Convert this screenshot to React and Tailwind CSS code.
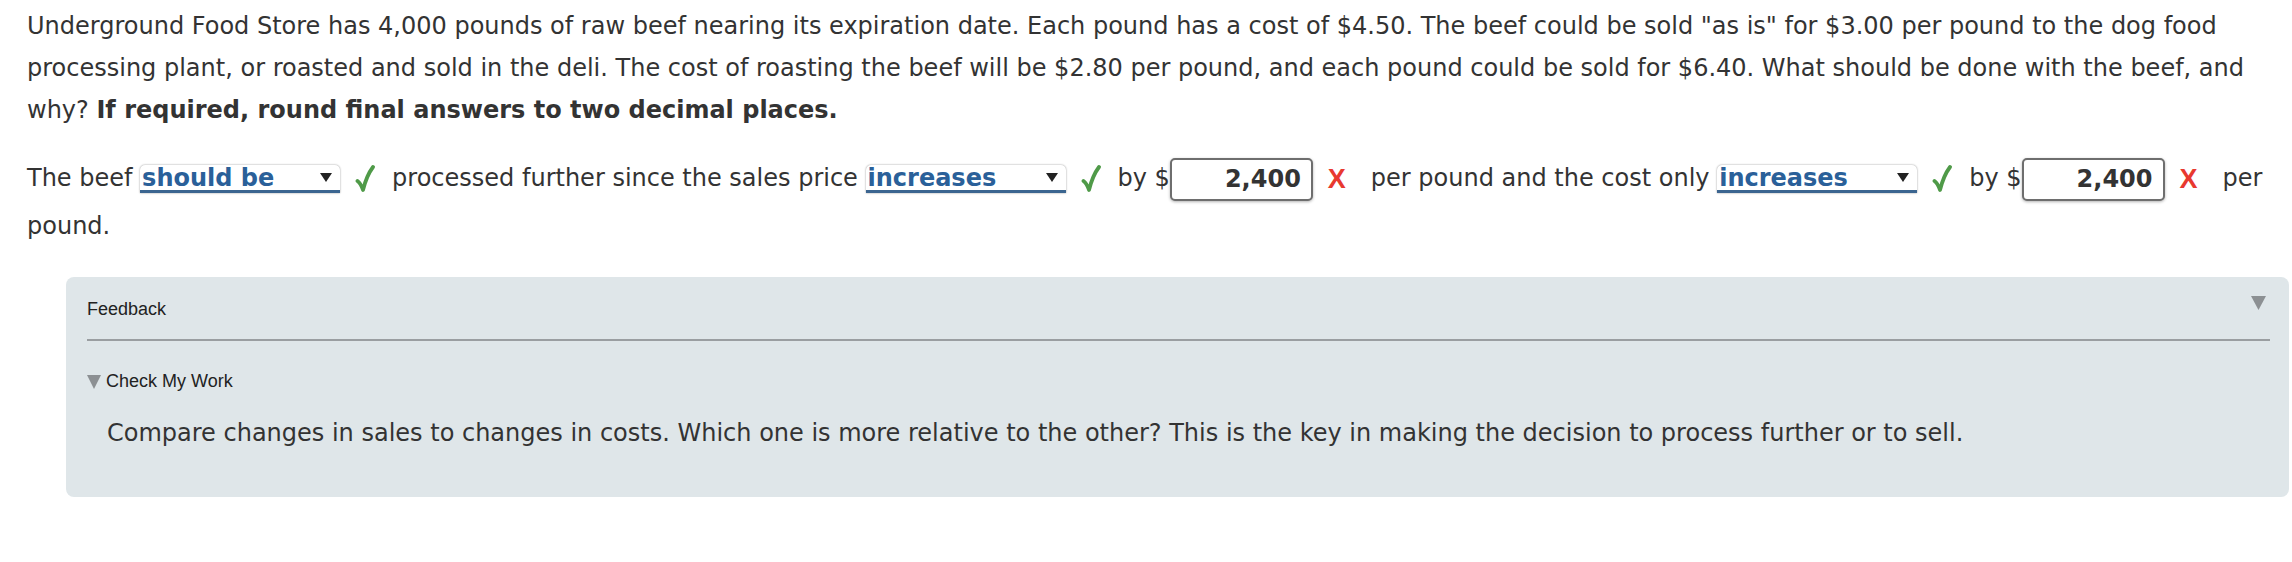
import React from "react";

const body = { fontFamily: "Verdana, 'DejaVu Sans', sans-serif" };
const arial = { fontFamily: "Helvetica, 'Liberation Sans', Arial, sans-serif" };

function Check() {
  return (
    <svg width="20" height="28" viewBox="0 0 20 28" className="inline-block align-middle ml-[15px] mr-[17px]">
      <path d="M2.5 16 C4.5 17.5 6.5 20.5 8 25 C10.5 15 13.5 8 18 2" fill="none" stroke="#4f9a48" strokeWidth="3.8" strokeLinecap="round" strokeLinejoin="round" />
    </svg>
  );
}

function Cross() {
  return (
    <span
      className="inline-block align-middle ml-[15px] mr-[25px] text-[27px] font-bold text-[#e8392f] leading-none"
      style={arial}
    >
      X
    </span>
  );
}

function Select({ label }) {
  return (
    <span className="inline-flex items-center justify-between align-middle w-[200px] h-[28px] bg-white rounded-t-[5px] border-b-[3px] border-[#3b6590] shadow-[0_0_2px_rgba(0,0,0,0.45)] pl-[2px] pr-[8px] leading-none">
      <span className="font-bold text-[#2a6099]">{label}</span>
      <svg width="12" height="9" viewBox="0 0 12 9">
        <path d="M0 0 H12 L6 9 Z" fill="#222" />
      </svg>
    </span>
  );
}

function Amount() {
  return (
    <span className="inline-flex items-center justify-end align-middle w-[143px] h-[43px] bg-white rounded-[5px] border-2 border-[#6e6e6e] shadow-[0_1px_3px_rgba(0,0,0,0.3)] pr-[10px] font-bold text-[#333] leading-none">
      2,400
    </span>
  );
}

export default function App() {
  return (
    <div className="w-[2292px] h-[562px] bg-white text-[#333] text-[24px]" style={body}>
      <div className="pl-[27px] pr-[8px] pt-[5px]">
        <p className="leading-[42px]">
          Underground Food Store has 4,000 pounds of raw beef nearing its expiration date. Each pound has a cost of $4.50. The beef could be sold "as is" for $3.00 per pound to the dog food processing plant, or roasted and sold in the deli. The cost of roasting the beef will be $2.80 per pound, and each pound could be sold for $6.40. What should be done with the beef, and why? <b>If required, round final answers to two decimal places.</b>
        </p>
        <p className="leading-[48px] mt-[23px]">
          The beef <Select label="should be" />
          <Check />
          processed further since the sales price <Select label="increases" />
          <Check />
          by $<Amount />
          <Cross />
          per pound and the cost only <Select label="increases" />
          <Check />
          by $<Amount />
          <Cross />
          per pound.
        </p>
      </div>
      <div className="ml-[66px] mr-[3px] mt-[27px] h-[220px] bg-[#dfe6e9] rounded-[8px] pl-[21px] pr-[19px]">
        <div className="flex items-center justify-between h-[64px] border-b-2 border-[#9a9ea1] pt-[2px]">
          <span className="text-[18px] text-[#222]" style={arial}>Feedback</span>
          <svg width="15" height="14" viewBox="0 0 15 14" className="mr-[4px] mb-[12px]">
            <path d="M0 0 H15 L7.5 14 Z" fill="#8c9093" />
          </svg>
        </div>
        <div className="flex items-center mt-[27px] gap-[5px]">
          <svg width="14" height="14" viewBox="0 0 14 14">
            <path d="M0 0 H14 L7 14 Z" fill="#8c9093" />
          </svg>
          <span className="text-[18px] text-[#222]" style={arial}>Check My Work</span>
        </div>
        <p className="mt-[24px] ml-[20px] leading-[28px] text-[#333]">
          Compare changes in sales to changes in costs. Which one is more relative to the other? This is the key in making the decision to process further or to sell.
        </p>
      </div>
    </div>
  );
}
